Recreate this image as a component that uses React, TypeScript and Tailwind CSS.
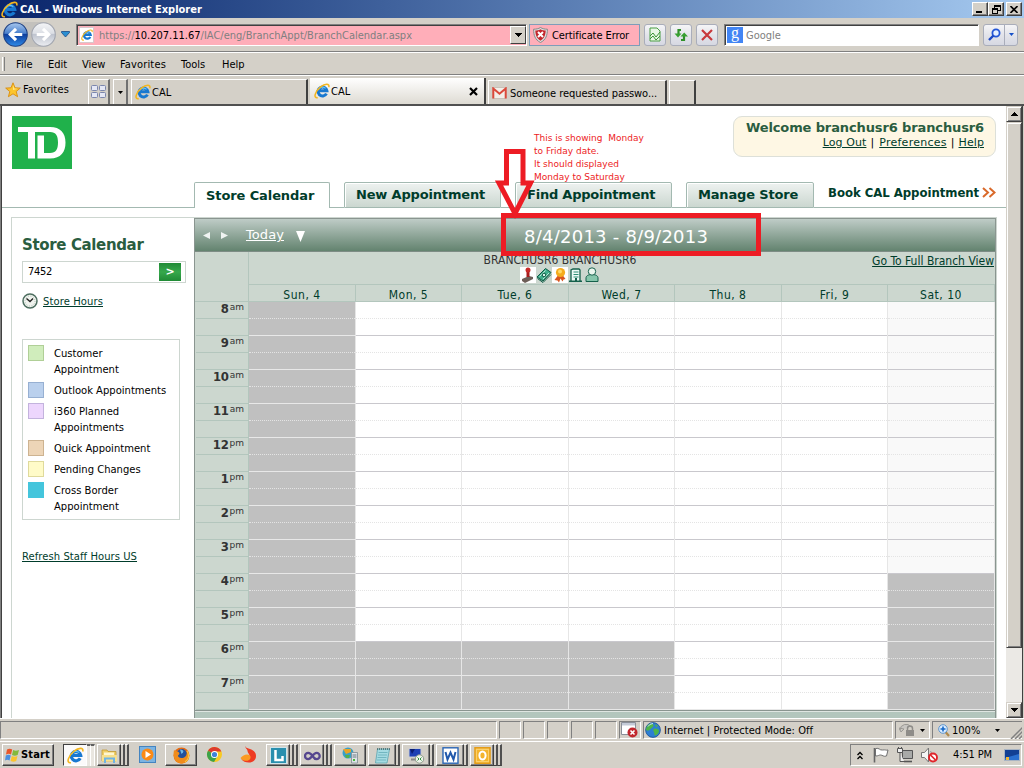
import React from "react";

type Kids = { children?: React.ReactNode; className?: string };

/* ---------- icons ---------- */

const IE = ({ s = 18 }: { s?: number }) => (
  <svg width={s} height={s} viewBox="0 0 18 18" className="shrink-0">
    <path d="M14 11.900a5 5 0 1 1 .5-3.100H6" fill="none" stroke="#1878d0" strokeWidth="3.400" />
    <path d="M13 6A5 5 0 0 0 4.800 8" fill="none" stroke="#63c4f7" strokeWidth="1.300" />
    <path d="M4.200 16.600C-1.500 17.500 1.500 9 7.500 4.400 12 .8 18 0 16.600 4.800" fill="none" stroke="#f3b61f" strokeWidth="1.700" />
  </svg>
);
const Shield = () => (
  <svg width="15" height="16" viewBox="0 0 15 16" className="shrink-0">
    <path d="M7.500.5C9.500 1.800 12 2.200 14.400 2.200c0 6-1.400 10.600-6.900 13.300C2 12.800.6 8.200.6 2.200 3 2.200 5.500 1.800 7.500.5Z" fill="#ddd" stroke="#888" />
    <path d="M7.500 2.200c1.700 1 3.400 1.300 5.200 1.400-.2 4.700-1.500 8-5.200 10.200C3.800 11.600 2.500 8.300 2.300 3.600 4.100 3.500 5.800 3.200 7.500 2.200Z" fill="#c4262c" />
    <path d="m5 5 5 5m0-5-5 5" stroke="#fff" strokeWidth="2" />
  </svg>
);
const Star = () => (
  <svg width="16" height="16" viewBox="0 0 16 16">
    <path d="m8 .8 2 5 5.300.3-4.100 3.400 1.400 5.200L8 11.800l-4.600 2.900 1.400-5.200L.7 6.100 6 5.800Z" fill="#fcc52c" stroke="#d98c0c" strokeWidth=".9" />
    <path d="m8 3 1.200 3.500 3.300.3L8 8Z" fill="#ffe68c" />
  </svg>
);
const Quad = () => (
  <svg width="16" height="14" viewBox="0 0 16 14">
    <g fill="#e4e7f5" stroke="#7b86ad">
      <rect x=".5" y=".5" width="6" height="5" rx="1" />
      <rect x="8.500" y=".5" width="6" height="5" rx="1" />
      <rect x=".5" y="7.500" width="6" height="5" rx="1" />
      <rect x="8.500" y="7.500" width="6" height="5" rx="1" />
    </g>
  </svg>
);
const Gmail = () => (
  <svg width="15" height="12" viewBox="0 0 15 12" className="shrink-0">
    <rect x="1" y=".5" width="13" height="11" fill="#f3efe9" stroke="#c9c1b8" />
    <path d="M1.300 11.500V1.500l6.200 5.300 6.200-5.300v10" fill="none" stroke="#db4a3c" strokeWidth="2" />
  </svg>
);
const Down = () => (
  <svg width="7" height="4" viewBox="0 0 7 4" shapeRendering="crispEdges">
    <path d="M0 0h7L3.500 4Z" />
  </svg>
);
const Round = ({ s, on }: { s: number; on: boolean }) => (
  <svg width={s} height={s} viewBox="0 0 24 24" className="shrink-0">
    <defs>
      <linearGradient id={on ? "nb" : "ng"} x2="0" y2="1">
        <stop offset="0" stopColor={on ? "#a9c8ee" : "#f4f5f7"} />
        <stop offset=".45" stopColor={on ? "#4a80cc" : "#dcdfe5"} />
        <stop offset=".5" stopColor={on ? "#0e3f9e" : "#bfc4cf"} />
        <stop offset="1" stopColor={on ? "#2f8be8" : "#eceef2"} />
      </linearGradient>
    </defs>
    <circle cx="12" cy="12" r="11.300" fill={on ? "url(#nb)" : "url(#ng)"} stroke={on ? "#1c3f83" : "#a2a6b0"} />
    <path d={on ? "M18.500 12H7m5.500-5.500L7 12l5.500 5.500" : "M5.500 12H17m-5.500-5.500L17 12l-5.500 5.500"} fill="none" stroke="#fff" strokeWidth="3" />
  </svg>
);
const Globe = () => (
  <svg width="16" height="16" viewBox="0 0 16 16">
    <circle cx="8" cy="8" r="7.400" fill="#2d7fd3" stroke="#1b4f94" strokeWidth=".8" />
    <path d="M3 3c2-2 5-1.500 5.500 0S7 5.500 6 6.500 4 9 2 8.500 1.500 5 3 3ZM9 7c2-1 5 0 5 2s-2 4-3.500 4.500S9.500 11 9 10 7.500 8 9 7ZM10 2l3 2-2 1Z" fill="#4fb548" />
    <path d="M3 4.500a6 6 0 0 1 5-3" stroke="#c9e6ff" fill="none" />
  </svg>
);

const taskIcons: Record<string, React.ReactNode> = {
  explorer: (
    <>
      <path d="M1 3h5l1 1.500h8V14H1Z" fill="#f0cf68" stroke="#c49a32" strokeWidth=".8" />
      <path d="M3 5.500h10V9H3Z" fill="#fff6d0" />
      <path d="M1 8h15v6.500H1Z" fill="#f8e08c" />
      <path d="M4 16v-4.500h9V16" fill="none" stroke="#6fb4e4" strokeWidth="2" />
    </>
  ),
  wmp: (
    <>
      <rect x=".5" y=".5" width="16" height="16" fill="#7bb3e2" stroke="#4484c0" />
      <circle cx="8.500" cy="8.500" r="6" fill="#fb8a16" />
      <path d="M6.500 5v7l5.500-3.500Z" fill="#fff" />
    </>
  ),
  firefox: (
    <>
      <circle cx="8.500" cy="8.500" r="8" fill="#e66a12" />
      <circle cx="8.800" cy="7" r="5" fill="#23519c" />
      <path d="M7 2.500c3 0 4 1.500 3 3L8.500 7Z" fill="#6fb9e8" />
      <path d="M1 3c1 1 2 .6 3 1.600 2 .6 3 1.400 2 2.800-2 1-1 3.600 2.500 3.600 3 0 5.500-2 5.500-6 4 6 0 11.500-5.500 11.500S-.6 11 1 3Z" fill="#f08c1c" />
      <path d="M14 4c3 5 1 9-2 11" fill="none" stroke="#fbc93a" strokeWidth="1.300" />
    </>
  ),
  chrome: (
    <>
      <circle cx="8.500" cy="8.500" r="7.500" fill="#f8c922" />
      <path d="M8.500 8.500 2 4.700A7.500 7.500 0 0 1 15.300 5.500H8.500Z" fill="#dd3b2e" />
      <path d="M2 4.700A7.500 7.500 0 0 0 8 16l3.500-6-3-1.500Z" fill="#3da24b" />
      <circle cx="8.500" cy="8.500" r="3.500" fill="#fff" />
      <circle cx="8.500" cy="8.500" r="2.600" fill="#3f83d8" />
    </>
  ),
  flame: (
    <>
      <path d="M5.500 0c.5 1.500 1 2 3 2.500 4 1 7.500 3 7.500 7.500 0 4-3 6.500-7 6.500-3.500 0-6-1-8-4 3 1.500 8 1 8.500-2.500.3-2-2-3-2-5C7.500 3 5 2.500 5.500 0Z" fill="#ee3b23" />
      <path d="M.5 12c2-2 4-3.500 6.500-3.500S11 10 10.500 12s-2.500 3-5 2.800S1.500 13.500.5 12Z" fill="#fb9a22" />
    </>
  ),
  lync: (
    <>
      <rect x=".5" y=".5" width="16" height="16" fill="#2a8fae" stroke="#cfe4ea" />
      <path d="M5.500 3v10h7V9" fill="none" stroke="#fff" strokeWidth="2.500" />
    </>
  ),
  vs: <path d="M8.500 9C7 6.500 5.500 5.800 4.200 5.800a3 3 0 0 0 0 6.400C7.500 12.200 9 5.800 12.500 5.800a3.100 3.100 0 0 1 0 6.400C11 12.200 9.500 10.500 8.500 9Z" fill="none" stroke="#56478f" strokeWidth="2.300" />,
  server: (
    <>
      <circle cx="6" cy="6" r="5.500" fill="#37a0c8" />
      <path d="M1 2h8v3L4 7Z" fill="#e9a326" />
      <path d="M3 8h5l-1 3H4Z" fill="#53b04a" />
      <path d="M9.500 5.500h6V16h-6Z" fill="#dfe4e8" stroke="#7f8a92" strokeWidth=".8" />
      <path d="M10.500 8h4m-4 2h4" stroke="#6c7b84" />
      <rect x="11" y="12" width="2" height="2" fill="#46b83c" />
    </>
  ),
  notepad: (
    <>
      <path d="M3.500 2h12L13 16H1.500Z" fill="#a5dbe2" stroke="#5aa3ae" strokeWidth=".8" />
      <path d="M4.500 5.500h9M4 8h9M3.500 10.500h9M3 13h9" stroke="#72b6c0" />
      <path d="M3 2h13" stroke="#466" strokeWidth="1.600" strokeDasharray="1 1" />
    </>
  ),
  rdp: (
    <>
      <path d="M1 1.500h12V10H1Z" fill="#1c3fb4" stroke="#c8ccd4" />
      <path d="M2 2h5l-3 5Z" fill="#0b1c72" />
      <path d="M3 12.500h6" stroke="#888" strokeWidth="2" />
      <circle cx="11.500" cy="12" r="4.200" fill="#eef3ea" stroke="#8c9a88" />
      <path d="m9.500 10.500 1.500 1.500-1.500 1.500m4-3L12 12l1.500 1.500" fill="none" stroke="#2f9440" />
    </>
  ),
  word: (
    <>
      <rect x="1" y=".8" width="15" height="15.400" fill="#fff" stroke="#2b65b4" strokeWidth="1.400" />
      <path d="m3.500 5 2 7.500 3-7 3 7 2-7.500" fill="none" stroke="#2158ab" strokeWidth="2" />
    </>
  ),
  outlook: (
    <>
      <rect x="1" y=".8" width="15" height="15.400" fill="#fbd06a" stroke="#e39a12" strokeWidth="1.500" />
      <rect x="3" y="3" width="11" height="11" fill="#f4b42c" />
      <ellipse cx="8.500" cy="8.500" rx="3.100" ry="3.900" fill="none" stroke="#fff" strokeWidth="2" />
    </>
  ),
};
const TI = ({ n }: { n: string }) => (
  <svg width="17" height="17" viewBox="0 0 17 17" className="shrink-0">
    {taskIcons[n]}
  </svg>
);

/* ---------- chrome pieces ---------- */

const Nav = ({ children, className = "" }: Kids) => (
  <div className={`flex h-[22px] items-center justify-center rounded-[3px] border border-[#a9adba] bg-linear-to-b from-[#f5f5f7] via-[#e3e4ea] to-[#d6d8e2] ${className}`}>{children}</div>
);
const Sunk = ({ children, className = "" }: Kids) => (
  <div className={`flex h-[18px] shrink-0 items-center border border-t-[#808080] border-r-white border-b-white border-l-[#808080] ${className}`}>{children}</div>
);
const WinBtn = ({ children, className = "" }: Kids) => (
  <div className={`flex h-[14px] w-4 items-center justify-center border border-t-white border-r-[#404040] border-b-[#404040] border-l-white bg-[#d4d0c8] shadow-[inset_-1px_-1px_0_#808080] ${className}`}>{children}</div>
);
const Task = ({ n, stack = 0, className = "" }: { n: string; stack?: number; className?: string }) => (
  <div className={`flex h-[22px] w-8 shrink-0 ${className}`}>
    <div className="flex flex-1 items-center justify-center border border-t-white border-r-[#404040] border-b-[#404040] border-l-white shadow-[inset_-1px_-1px_0_#808080]">
      <TI n={n} />
    </div>
    {stack > 0 && <div className="w-1 border-y border-r-2 border-t-white border-r-[#505050] border-b-[#404040]" />}
    {stack > 1 && <div className="w-1 border-y border-r-2 border-t-white border-r-[#505050] border-b-[#404040]" />}
  </div>
);

const tabBase = "flex h-[26px] items-center border border-[#a3b9b1] pl-[11px] text-[13px] font-bold text-[#003c2b]";
const Tab = ({ children, className = "" }: Kids) => (
  <div className={`${tabBase} rounded-t-[2px] bg-linear-to-b from-[#eef2f0] to-[#cbd7d0] shadow-[inset_1px_1px_0_#fff] ${className}`}>{children}</div>
);
const Line = ({ className }: Kids) => <div className={`h-[26px] border-b border-[#a3b9b1] ${className}`} />;

const days = ["Sun, 4", "Mon, 5", "Tue, 6", "Wed, 7", "Thu, 8", "Fri, 9", "Sat, 10"];
const hours = ["8am", "9am", "10am", "11am", "12pm", "1pm", "2pm", "3pm", "4pm", "5pm", "6pm", "7pm"];
const closedFrom = [0, 10, 10, 10, 12, 12, 8];
const cols = "grid grid-cols-[54px_107px_106px_107px_106px_107px_106px_107px]";

const legend: [string, string, string][] = [
  ["bg-[#d0edbc] border-[#b0cf97]", "Customer Appointment", "h-[37px]"],
  ["bg-[#bad0ed] border-[#97b0d2]", "Outlook Appointments", "h-[21px]"],
  ["bg-[#edd6fd] border-[#c3b3dd]", "i360 Planned Appointments", "h-[37px]"],
  ["bg-[#edd5b7] border-[#cdb391]", "Quick Appointment", "h-[21px]"],
  ["bg-[#fffbc8] border-[#dfda9c]", "Pending Changes", "h-[21px]"],
  ["bg-[#44c5dc] border-[#44c5dc]", "Cross Border Appointment", "h-[37px]"],
];

function TitleAndBars() {
  return (
    <>
      <div className="flex h-[18px] items-center bg-linear-to-r from-[#0a246a] to-[#a6caf0] pl-[1px]">
        <IE s={17} />
        <span className="ml-[2px] flex-1 pt-px text-[11px] leading-[17px] font-bold text-white">CAL - Windows Internet Explorer</span>
        <WinBtn><svg width="8" height="8"><path d="M0 6h6v2H0Z" /></svg></WinBtn>
        <WinBtn>
          <svg width="9" height="9" shapeRendering="crispEdges"><path d="M2.500 3V.5h6v5H6M2 1h7M.5 3.500h5v5h-5ZM0 4h6" fill="none" stroke="#000" /></svg>
        </WinBtn>
        <WinBtn className="mr-[2px] ml-[2px]"><svg width="8" height="7"><path d="m.5 0 7 7m0-7-7 7" stroke="#000" strokeWidth="1.600" /></svg></WinBtn>
      </div>

      <div className="flex h-[34px] items-center border-b border-[#808080] pl-[3px]">
        <div className="flex items-center rounded-full bg-[#c3c1bd]">
          <Round s={25} on />
          <div className="ml-[3px] flex"><Round s={25} on={false} /></div>
        </div>
        <svg width="9" height="7" className="ml-[5px]"><path d="M.5.5h8v1L4.500 6 .5 1.500Z" fill="#2a8fd2" stroke="#1a4a86" strokeWidth=".8" /></svg>
        <div className="ml-[6px] flex h-[22px] w-[451px] items-center border border-t-[#808080] border-r-white border-b-white border-l-[#808080] bg-[#ffaeb9] pl-[2px] shadow-[inset_1px_1px_0_#404040]">
          <div className="flex h-4 w-[15px] items-center justify-center border border-[#d8c8cc] bg-white"><IE s={12} /></div>
          <span className="ml-[5px] flex-1 pt-[4px] text-[11px] text-[#808080]">https://<span className="text-black">10.207.11.67</span>/IAC/eng/BranchAppt/BranchCalendar.aspx</span>
          <div className="flex h-[18px] w-4 items-center justify-center border border-t-white border-r-[#404040] border-b-[#404040] border-l-white bg-[#d4d0c8]"><Down /></div>
        </div>
        <div className="ml-[2px] flex h-[22px] w-[111px] items-center border border-[#7f9db9] bg-[#ffaeb9] pl-[3px]">
          <Shield />
          <span className="ml-[4px] pt-[4px] text-[11px] tracking-[-0.09px]">Certificate Error</span>
        </div>
        <Nav className="ml-[4px] w-[22px]">
          <svg width="12" height="15"><path d="M1 1h7l3 3v10H1Z" fill="#e9f7e4" stroke="#4a9e44" /><path d="m1 9 3-3 3 4 4-5M1 12l3-3 3 4 4-4" stroke="#3b9434" fill="none" /></svg>
        </Nav>
        <Nav className="ml-[4px] w-[22px]">
          <svg width="16" height="16"><path d="M8 3H5.500v4M8 13h3V9" fill="none" stroke="#2f9129" strokeWidth="2.200" /><path d="M1.500 6.500h7L5 10.500ZM7.500 9.500h7.500l-3.800-4Z" fill="#37a031" /></svg>
        </Nav>
        <Nav className="ml-[4px] w-[22px]">
          <svg width="12" height="12"><path d="m1 1 10 10M11 1 1 11" stroke="#c8383c" strokeWidth="2.200" /></svg>
        </Nav>
        <div className="ml-[6px] flex h-[22px] w-[255px] items-center border border-t-[#808080] border-r-white border-b-white border-l-[#808080] bg-white pl-[2px] shadow-[inset_1px_1px_0_#404040]">
          <div className="flex size-4 items-center justify-center bg-[#4285f4] pb-[3px] font-['Liberation_Serif',serif] text-[16px] text-white">g</div>
          <span className="ml-[3px] pt-[4px] text-[11px] text-[#808080]">Google</span>
        </div>
        <Nav className="ml-[4px] w-[22px] rounded-r-none">
          <svg width="13" height="13"><circle cx="8" cy="5" r="3.600" fill="#e4efff" stroke="#2456d6" strokeWidth="1.800" /><path d="M5.500 7.500 1 12" stroke="#1c48c4" strokeWidth="2.400" /></svg>
        </Nav>
        <Nav className="ml-[-1px] w-[14px] rounded-l-none"><svg width="5" height="3"><path d="M0 0h5L2.500 3Z" fill="#1650c8" /></svg></Nav>
      </div>

      <div className="flex h-[23px] items-center border-t border-b border-t-white border-b-[#808080] pl-[2px] text-[11px]">
        <div className="h-[14px] w-[3px] border-r border-l border-l-white border-r-[#808080]" />
        <div className="flex pt-[3px] pl-[11px]">
          <span className="w-8">File</span>
          <span className="w-[34px]">Edit</span>
          <span className="w-[38px]">View</span>
          <span className="w-[61px] tracking-[0.15px]">Favorites</span>
          <span className="w-[41px]">Tools</span>
          <span>Help</span>
        </div>
      </div>

      <div className="flex h-[31px] items-end border-t border-b-2 border-t-white border-b-[#505050] text-[11px]">
        <div className="flex h-7 w-[87px] items-center pl-[5px]"><Star /><span className="ml-[2px] pt-px pb-px tracking-[0.15px]">Favorites</span></div>
        <div className="ml-[1px] flex h-[25px] w-[22px] items-center justify-center border-t border-r-2 border-l border-t-white border-r-[#707070] border-l-white"><Quad /></div>
        <div className="ml-[3px] flex h-[25px] w-[15px] items-center justify-center border-t border-r-2 border-l border-t-white border-r-[#707070] border-l-white"><svg width="5" height="3"><path d="M0 0h5L2.500 3Z" /></svg></div>
        <div className="ml-[3px] flex h-[25px] w-[177px] items-center border-t border-r-2 border-l border-t-white border-r-[#404040] border-l-white pl-[3px]"><IE s={16} /><span className="ml-[1px] pt-[3px]">CAL</span></div>
        <div className="ml-[2px] flex h-[26px] w-[176px] items-center border-r-2 border-r-[#404040] bg-linear-to-b from-white to-[#dedbd3] pb-[1px] pl-[4px]">
          <IE s={16} /><span className="ml-[1px] flex-1 pt-[4px]">CAL</span>
          <svg width="9" height="9" className="mt-[2px] mr-[6px]"><path d="m1 1 7 7m0-7-7 7" stroke="#000" strokeWidth="2.200" /></svg>
        </div>
        <div className="ml-[2px] flex h-[24px] w-[179px] items-center border-t border-r-2 border-l border-t-white border-r-[#404040] border-l-white pl-[3px]"><Gmail /><span className="ml-[3px] pt-[3px] whitespace-nowrap tracking-[-0.06px]">Someone requested passwo...</span></div>
        <div className="ml-[2px] h-[24px] w-[27px] border-t border-r-2 border-l border-t-white border-r-[#404040] border-l-white" />
      </div>
    </>
  );
}

function Header() {
  return (
    <div className="flex h-[102px] shrink-0 flex-col">
      <div className="flex h-[76px] items-start justify-between pt-[10px] pr-[10px] pl-[10px]">
        <div className="flex h-[53px] w-[60px] items-center justify-center bg-[#20b14b]">
          <svg width="48" height="32" viewBox="0 0 48 32"><path d="M0 0h32c10.500 0 15.500 6 15.500 15.500S43 31.500 32 31.500H19.500V8.500H26V26h6c6 0 8-4 8-10.500S38 5 32 5H17v26.500H10V5H0Z" fill="#fff" /></svg>
        </div>
        <div className="h-[41px] w-[263px] rounded-[9px] border border-[#dde0d9] bg-[#fef7e4] pr-[11px] text-right">
          <div className="mt-[2px] text-[13px] leading-[17px] font-bold tracking-[-0.12px] whitespace-nowrap text-[#2a5d40]">Welcome branchusr6 branchusr6</div>
          <div className="text-[11px] leading-[13px] tracking-[0.1px] whitespace-nowrap text-black">
            <span className="text-[#003c2b] underline">Log Out</span><span className="mr-[5px] ml-[4px]">|</span><span className="tracking-[0.25px] text-[#003c2b] underline">Preferences</span><span className="mx-[4px]">|</span><span className="text-[#003c2b] underline">Help</span>
          </div>
        </div>
      </div>
      <div className="flex whitespace-nowrap">
        <Line className="w-48" />
        <div className={`${tabBase} w-[136px] rounded-t-[2px] border-b-0 bg-white tracking-[-0.1px]`}>Store Calendar</div>
        <Line className="w-[14px]" />
        <Tab className="w-[157px] tracking-[-0.17px]">New Appointment</Tab>
        <Line className="w-[14px]" />
        <Tab className="w-[157px] tracking-[-0.22px]">Find Appointment</Tab>
        <Line className="w-[14px]" />
        <Tab className="w-[128px] tracking-[-0.17px]">Manage Store</Tab>
        <div className="flex h-[26px] flex-1 border-b border-[#a3b9b1] pl-[14px] font-['DejaVu_Sans_Condensed','DejaVu_Sans',sans-serif] text-[13px] leading-[21px] font-bold tracking-[-0.03px] text-[#003c2b]">
          Book CAL Appointment
          <svg width="14" height="11" className="mt-[5px] ml-[3px]"><path d="m1 1 5 4.500L1 10M7.500 1l5 4.500-5 4.500" fill="none" stroke="#d9692a" strokeWidth="2" /></svg>
        </div>
      </div>
    </div>
  );
}

function Sidebar() {
  return (
    <div className="flex w-[182px] shrink-0 flex-col pl-[10px]">
      <div className="mt-[17px] text-[15px] leading-[20px] font-bold tracking-[-0.36px] text-[#2a5d40]">Store Calendar</div>
      <div className="mt-[6px] flex h-[22px] w-[164px] items-center border border-[#cdd6d0] pl-[5px] font-['DejaVu_Sans_Condensed','DejaVu_Sans',sans-serif] text-[11px]">
        <span className="flex-1 pt-px tracking-[-0.3px]">7452</span>
        <div className="mr-[4px] flex h-[18px] w-[22px] items-center justify-center bg-linear-to-b from-[#1f8a35] via-[#36a84c] to-[#1f8a35] font-['DejaVu_Sans',sans-serif] text-[11px] font-bold text-white">&gt;</div>
      </div>
      <div className="mt-[10px] flex items-center">
        <svg width="16" height="16"><circle cx="8" cy="8" r="7" fill="#f1f4ef" stroke="#4d6e60" strokeWidth="1.500" /><circle cx="8" cy="8" r="5" fill="none" stroke="#a9bbb0" strokeDasharray="1 1.600" /><path d="M4.500 5.500 8 8.500l3-3" fill="none" stroke="#222" strokeWidth="1.400" /></svg>
        <span className="ml-[5px] text-[10px] tracking-[0.1px] text-[#003c2b] underline">Store Hours</span>
      </div>
      <div className="mt-[30px] h-[181px] w-[158px] border border-[#cdd6d0] pt-[5px] pl-[5px]">
        {legend.map(([c, t, h]) => (
          <div key={t} className={`flex ${h}`}>
            <div className={`size-4 shrink-0 border ${c}`} />
            <div className="ml-[10px] w-[115px] pt-px text-[10px] leading-4 text-black">{t}</div>
          </div>
        ))}
      </div>
      <div className="mt-[29px] text-[10px] tracking-[0.06px] text-[#003c2b] underline">Refresh Staff Hours US</div>
    </div>
  );
}

function RoleIcons() {
  return (
    <div className="flex">
      <svg width="16" height="16"><rect width="16" height="16" fill="#fff" /><path d="m2 12 7-3 4 1v2l-8 4-3-2Z" fill="#6d5f58" /><path d="M8 10V4.500" stroke="#a81c1c" strokeWidth="3" /><circle cx="8" cy="3" r="2.500" fill="#c82a28" /></svg>
      <svg width="16" height="16"><path d="M1 10 9.500 1.500l5.500 4L7 14Z" fill="#3fae8c" stroke="#0d5a44" /><path d="m1.500 11.500 5.500 4 8-8" fill="none" stroke="#0d5a44" /><path d="m3.500 9.500 6-6M7 12l6-6" stroke="#b9ead9" /><circle cx="8" cy="8" r="1.800" fill="#d8f3ea" stroke="#0d5a44" /></svg>
      <svg width="16" height="16"><rect width="16" height="16" fill="#fff" /><path d="m5.500 9-3 4 3 .5 1.500 2 1.500-4 2 3 1-2 2-.5-3-4Z" fill="#d9551f" /><circle cx="8.500" cy="5.500" r="4.600" fill="#f5ab1d" /><circle cx="8" cy="4.500" r="2" fill="#ffd968" /></svg>
      <svg width="16" height="16"><path d="M3 14V3l2-1h6l1 1v11" fill="#eefaf5" stroke="#14604b" strokeWidth="1.300" /><path d="M5.500 5h5m-5 2.500h5m-5 2.500h5" stroke="#2e8f74" /><path d="M1 13.500h13V15H1ZM7 11h2v3H7Z" fill="#14604b" /></svg>
      <svg width="16" height="16"><path d="M2 14.500V11c0-2 2-3.500 6-3.500s6 1.500 6 3.500v3.500Z" fill="#86c6ac" stroke="#14604b" /><circle cx="8" cy="4.500" r="3.700" fill="#eaf6ee" stroke="#14604b" /></svg>
    </div>
  );
}

function Calendar() {
  return (
    <div className="flex w-[802px] shrink-0 flex-col border-x border-t border-[#8a9590]">
      <div className="flex h-[33px] items-center border-b border-[#7d8c85] bg-linear-to-b from-[#bfccc7] to-[#63836f] pl-[8px] text-white">
        <svg width="7" height="7"><path d="M7 0v7L0 3.500Z" fill="#f0f4f2" /></svg>
        <svg width="7" height="7" className="ml-[11px]"><path d="M0 0v7l7-3.500Z" fill="#f0f4f2" /></svg>
        <span className="ml-[18px] text-[13px] tracking-[0.08px] underline">Today</span>
        <svg width="9" height="11" className="mt-[2px] ml-[12px]"><path d="M0 0h9L4.500 11Z" fill="#fff" /></svg>
        <span className="ml-[219px] pt-[4px] text-[18px] leading-[20px] tracking-[0.24px] whitespace-nowrap">8/4/2013 - 8/9/2013</span>
      </div>

      <div className="flex h-[50px] border-b border-[#b3c6bd] bg-[#ccd7cf] font-['DejaVu_Sans_Condensed','DejaVu_Sans',sans-serif] text-[12px]">
        <div className="w-[54px] border-r border-[#b3c6bd]" />
        <div className="flex w-[746px] flex-col">
          <div className="flex h-[33px] border-b border-[#b3c6bd]">
            <div className="w-[204px]" />
            <div className="flex w-[216px] flex-col items-center">
              <div className="pt-[2px] pr-[2px] leading-[13px] whitespace-nowrap text-[#333]">BRANCHUSR6 BRANCHUSR6</div>
              <div className="pr-[2px]"><RoleIcons /></div>
            </div>
            <div className="flex-1 pt-[1px] pr-px text-right leading-[17px] whitespace-nowrap text-[#003c2b] underline">Go To Full Branch View</div>
          </div>
          <div className="grid h-4 grid-cols-[107px_106px_107px_106px_107px_106px_107px]">
            {days.map((d) => (
              <div key={d} className="border-r border-[#b3c6bd] text-center leading-[20px] tracking-[0.5px] text-[#003c2b]">{d}</div>
            ))}
          </div>
        </div>
      </div>

      {hours.map((h, i) => (
        <div key={h} className={cols}>
          <div className="h-[34px] border-r border-[#b3c6bd] bg-[#ccd7cf] pl-[1px]">
            <div className="flex h-[17px] items-start justify-end border-b border-[#b3c6bd] pr-[4px] text-[#333]">
              <span className="font-['DejaVu_Sans_Condensed','DejaVu_Sans',sans-serif] text-[13px] leading-[13px] font-bold tracking-[-0.3px]">{h.slice(0, -2)}</span>
              <span className="ml-[1px] text-[9px] leading-[10px]">{h.slice(-2)}</span>
            </div>
            <div className="h-[17px] border-b border-[#b3c6bd]" />
          </div>
          {closedFrom.map((from, d) => {
            const closed = i >= from;
            const last = closed || i + 1 === 12;
            return (
              <div key={d} className={`h-[34px] border-r border-[#e6e6e6] ${closed ? "bg-[#c0c0c0]" : d === 6 ? "bg-[#f9f9f9]" : "bg-white"}`}>
                <div className="h-[17px] border-b border-dotted border-[#e4e4e4]" />
                <div className={`h-[17px] border-b ${last ? "border-[#e8e8e8]" : "border-[#c9c8cd]"}`} />
              </div>
            );
          })}
        </div>
      ))}
      <div className="h-[2px] border-t border-b border-t-[#8a9590] border-b-[#dfe6e2]" />
      <div className="flex-1 bg-[#b3c6bd]" />
    </div>
  );
}

function Annotation() {
  return (
    <>
      <svg width="272" height="112" className="absolute top-[147px] left-[493px]">
        <rect x="10.500" y="68.500" width="255" height="38" fill="none" stroke="#ed1c24" strokeWidth="5" />
        <path d="M13.500 4.500H30v31.500h7.500L22 66.500 6 36h7.500Z" fill="none" stroke="#ed1c24" strokeWidth="5" />
      </svg>
      <div className="absolute top-[132px] left-[534px] text-[9px] leading-[13px] whitespace-pre text-[#ed1c24]">
        <div>This is showing  Monday</div>
        <div>to Friday date.</div>
        <div>It should displayed</div>
        <div>Monday to Saturday</div>
      </div>
    </>
  );
}

function Scrollbar() {
  const btn = "flex shrink-0 items-center justify-center border border-t-[#d4d0c8] border-r-[#404040] border-b-[#404040] border-l-[#d4d0c8] bg-[#d4d0c8] shadow-[inset_1px_1px_0_#fff,inset_-1px_-1px_0_#808080]";
  return (
    <div className="flex w-4 shrink-0 flex-col bg-[#ebe9e5]">
      <div className={`${btn} h-4`}><svg width="7" height="4" shapeRendering="crispEdges"><path d="M0 4h7L3.500 0Z" /></svg></div>
      <div className={`${btn} h-[526px]`} />
      <div className="flex-1" />
      <div className={`${btn} h-4`}><Down /></div>
    </div>
  );
}

function StatusBar() {
  return (
    <div className="flex h-[23px] items-start gap-[2px] border-t border-white pt-[2px] text-[11px] whitespace-nowrap">
      <Sunk className="w-[497px]" />
      <Sunk className="w-[22px]" />
      <Sunk className="w-[22px]" />
      <Sunk className="w-[22px]" />
      <Sunk className="w-[22px]" />
      <Sunk className="w-[22px]" />
      <Sunk className="w-[22px] pl-[1px]">
        <svg width="17" height="16"><path d="M.5.5h14v12H.5Z" fill="#fff" stroke="#8a8f98" /><path d="M1 1h13v2.500H1Z" fill="#c4cad6" /><circle cx="11.500" cy="10.500" r="5" fill="#c1272d" /><path d="m9.500 8.500 4 4m0-4-4 4" stroke="#fff" strokeWidth="1.600" /></svg>
      </Sunk>
      <Sunk className="w-[250px] pl-[1px]"><Globe /><span className="ml-[3px] pt-[3px] tracking-[0.05px]">Internet | Protected Mode: Off</span></Sunk>
      <Sunk className="w-[35px] pl-[3px]">
        <svg width="16" height="14"><path d="M1 7a6 6 0 0 1 11-3M0 5l2 4 3-3Z" fill="#c8c6c2" stroke="#9b9994" /><rect x="7" y="7" width="8" height="6" fill="#8e8c88" /><path d="M8.500 7V5.500a2.500 2.500 0 0 1 5 0V7" fill="none" stroke="#8e8c88" strokeWidth="1.500" /></svg>
        <span className="ml-[5px]"><svg width="5" height="3"><path d="M0 0h5L2.500 3Z" /></svg></span>
      </Sunk>
      <Sunk className="w-[90px] border-r-0 pl-[5px]">
        <svg width="12" height="13"><path d="m7.500 8 3.500 4" stroke="#b08a4c" strokeWidth="2.200" /><circle cx="5" cy="5" r="4.300" fill="#d9ecff" stroke="#5f94cc" /><path d="M5 2.500v5M2.500 5h5" stroke="#1568c8" strokeWidth="1.600" /></svg>
        <span className="ml-[2px] flex-1 pt-[3px]">100%</span>
        <svg width="5" height="3"><path d="M0 0h5L2.500 3Z" /></svg>
        <svg width="12" height="13" className="mt-[4px] ml-[10px]"><path d="M1 13 13 1M5 13l8-8M9 13l4-4" stroke="#808080" strokeWidth="1.500" /></svg>
      </Sunk>
    </div>
  );
}

function Taskbar() {
  return (
    <div className="flex h-[27px] items-start border-t border-white pt-[2px] pl-[2px] text-[11px]">
      <div className="flex h-[22px] w-[52px] shrink-0 items-center border border-t-white border-r-[#404040] border-b-[#404040] border-l-white pl-[2px] font-bold shadow-[inset_-1px_-1px_0_#808080]">
        <svg width="15" height="14" className="shrink-0"><path d="M2 1.500c2-1 3.500-.8 5.200 0L6 6.500C4.500 5.700 3 5.600 1 6.500Z" fill="#e9562a" /><path d="M8.200 2c2 1 3.600.8 5.800 0l-1.300 5c-2 .9-3.700.9-5.700 0Z" fill="#84b93c" /><path d="M.8 7.500c2-1 3.500-.8 5 0l-1.300 5c-1.500-.9-3-.9-4.500 0Z" fill="#4a8fe0" /><path d="M6.800 8c2 1 3.700.9 5.700 0l-1.300 5c-2 .9-3.700.8-5.600 0Z" fill="#fbc42d" /></svg>
        <span className="ml-px pt-px tracking-[0.15px]">Start</span>
      </div>
      <div className="ml-[9px] flex h-[22px] w-[24px] items-center justify-center border border-t-[#404040] border-r-white border-b-white border-l-[#404040] bg-white/90"><IE s={17} /></div>
      <div className="h-[22px] w-1 border-t-2 border-r border-t-[#606060] border-r-white bg-[#e9e6e0]" />
      <div className="h-[22px] w-1 border-t-2 border-r border-t-[#606060] border-r-white bg-[#e9e6e0]" />
      <Task n="explorer" stack={2} className="ml-[2px]" />
      <span className="mt-[2px] ml-[10px]"><TI n="wmp" /></span>
      <Task n="firefox" className="ml-[9px]" />
      <span className="mt-[2px] ml-[9px]"><TI n="chrome" /></span>
      <span className="mt-[2px] ml-[17px]"><TI n="flame" /></span>
      <Task n="lync" stack={2} className="ml-[9px]" />
      <Task n="vs" stack={2} className="ml-[2px]" />
      <Task n="server" className="ml-[2px]" />
      <Task n="notepad" stack={1} className="ml-[2px]" />
      <Task n="rdp" stack={1} className="ml-[2px]" />
      <Task n="word" stack={1} className="ml-[2px]" />
      <Task n="outlook" stack={2} className="ml-[2px]" />
      <div className="mr-[2px] ml-auto flex h-[22px] w-[172px] items-center border border-t-[#808080] border-r-white border-b-white border-l-[#808080] pl-[6px]">
        <svg width="6" height="9"><path d="m.5 4 2.500-2.500L5.500 4M.5 8 3 5.500 5.500 8" fill="none" stroke="#000" strokeWidth="1.300" /></svg>
        <svg width="16" height="16" className="ml-[10px]"><path d="M1.500 1v14.500" stroke="#666" strokeWidth="1.600" /><path d="M2.500 1.500c4-1 4 2 7 1.500s3 .5 5.500 0l-1.500 6c-3 1-4-1-6-1s-2 1-5 1Z" fill="#fff" stroke="#707070" /></svg>
        <svg width="17" height="16" className="ml-[8px]"><path d="M5.500 3.500h10v8h-10Z" fill="#a9aaa8" stroke="#555" /><path d="M7 14.500h8" stroke="#555" strokeWidth="1.600" /><path d="M.5 1.500h5v4h-5ZM3 5v9.500h4M1.500 0v2M4.500 0v2" fill="#eee" stroke="#555" /></svg>
        <svg width="18" height="16" className="ml-[7px]"><path d="M.5 5.500h3l4-4.500v14l-4-4.500h-3Z" fill="#f5f5f5" stroke="#777" /><path d="M9.500 4a5 5 0 0 1 1 4" fill="none" stroke="#999" /><circle cx="12" cy="10.500" r="4" fill="#fff" stroke="#e0242a" strokeWidth="1.900" /><path d="m9.500 8 5 5" stroke="#e0242a" strokeWidth="1.700" /></svg>
        <span className="ml-[14px] pt-px tracking-[-0.12px] whitespace-nowrap">4:51 PM</span>
        <svg width="16" height="12" className="ml-[12px] shrink-0"><rect x=".5" y=".5" width="15" height="11" fill="#2a6fd0" stroke="#a8b4c4" /><path d="M1 1h14v4L1 9Z" fill="#123f94" /><rect x="2" y="8" width="3" height="3" fill="#f0b83a" /></svg>
      </div>
    </div>
  );
}

export default function App() {
  return (
    <div className="relative flex h-[768px] w-[1024px] flex-col overflow-hidden bg-[#d4d0c8] font-['DejaVu_Sans_Condensed','DejaVu_Sans',sans-serif] text-black">
      <TitleAndBars />
      <div className="flex h-[612px] shrink-0 border-l border-[#808080]">
        <div className="flex flex-1 border-l border-[#404040]">
          <div className="flex w-[1004px] flex-col overflow-hidden bg-white font-['DejaVu_Sans','Open_Sans',sans-serif]">
            <Header />
            <div className="mt-[9px] ml-[9px] flex w-[986px] flex-1 border-x border-t border-[#cdd6d0]">
              <Sidebar />
              <Calendar />
            </div>
          </div>
          <Scrollbar />
          <div className="w-px bg-[#404040]" />
        </div>
      </div>
      <StatusBar />
      <Taskbar />
      <div className="font-['DejaVu_Sans','Open_Sans',sans-serif]"><Annotation /></div>
    </div>
  );
}
